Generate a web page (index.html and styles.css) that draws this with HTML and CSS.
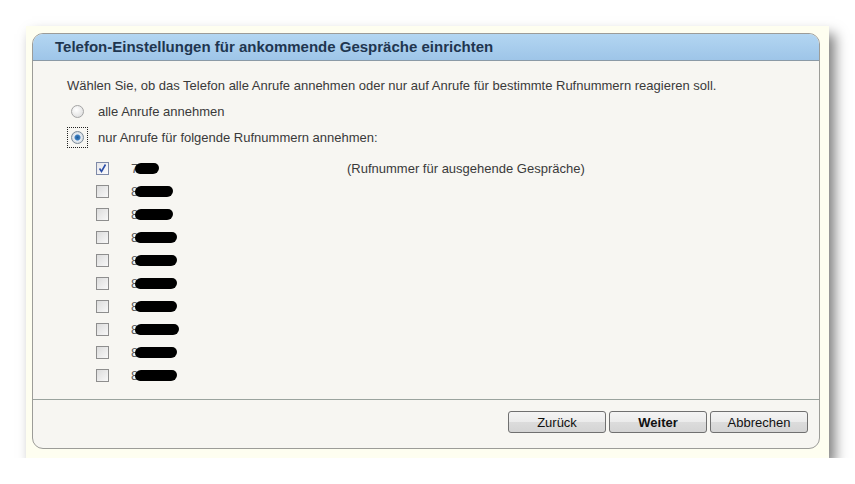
FILE: index.html
```html
<!DOCTYPE html>
<html lang="de">
<head>
    <meta charset="UTF-8">
    <title>Telefon-Einstellungen</title>
    <link rel="stylesheet" href="styles.css">
</head>
<body>
    <div class="frame">
        <div class="panel">
            <div class="panel-head">Telefon-Einstellungen für ankommende Gespräche einrichten</div>
            <div class="panel-body">
                <p class="intro">Wählen Sie, ob das Telefon alle Anrufe annehmen oder nur auf Anrufe für bestimmte Rufnummern reagieren soll.</p>
                <div class="radio-row">
                    <span class="radio"></span>
                    <span>alle Anrufe annehmen</span>
                </div>
                <div class="radio-row">
                    <span class="focus"><span class="radio checked"></span></span>
                    <span>nur Anrufe für folgende Rufnummern annehmen:</span>
                </div>
                <ul class="numbers">
                    <li>
                        <span class="check checked">
                            <svg width="11" height="11" viewBox="0 0 11 11"><path d="M2.5 5.5 L4.5 8.5 L8.5 1.5" fill="none" stroke="#2b4ea8" stroke-width="1.6"/></svg>
                        </span>
                        <span class="num">7<span class="blob" style="width:24px"></span></span>
                        <span class="note">(Rufnummer für ausgehende Gespräche)</span>
                    </li>
                    <li><span class="check"></span><span class="num">8<span class="blob" style="width:38px"></span></span></li>
                    <li><span class="check"></span><span class="num">8<span class="blob" style="width:38px"></span></span></li>
                    <li><span class="check"></span><span class="num">8<span class="blob" style="width:42px"></span></span></li>
                    <li><span class="check"></span><span class="num">8<span class="blob" style="width:42px"></span></span></li>
                    <li><span class="check"></span><span class="num">8<span class="blob" style="width:42px"></span></span></li>
                    <li><span class="check"></span><span class="num">8<span class="blob" style="width:42px"></span></span></li>
                    <li><span class="check"></span><span class="num">8<span class="blob" style="width:44px"></span></span></li>
                    <li><span class="check"></span><span class="num">8<span class="blob" style="width:42px"></span></span></li>
                    <li><span class="check"></span><span class="num">8<span class="blob" style="width:42px"></span></span></li>
                </ul>
            </div>
            <div class="panel-foot">
                <button>Zurück</button>
                <button class="primary">Weiter</button>
                <button>Abbrechen</button>
            </div>
        </div>
    </div>
</body>
</html>
```

FILE: styles.css
```css
body {
    margin: 0;
    background: #ffffff;
    font-family: "Liberation Sans", Arial, sans-serif;
    font-size: 13px;
    color: #3a3a3a;
}
.frame {
    margin: 26px 0 0 26px;
    width: 788px;
    height: 416px;
    padding: 7px 9px 9px 6px;
    background: #fefef0;
    box-shadow: 6px 8px 12px rgba(0, 0, 0, 0.5);
}
.panel {
    height: 414px;
    border: 1px solid #9c9c98;
    border-radius: 11px;
    background: #f7f6f2;
    display: flex;
    flex-direction: column;
    overflow: hidden;
}
.panel-head {
    height: 26px;
    line-height: 26px;
    padding-left: 22px;
    font-size: 15px;
    font-weight: bold;
    color: #1f3650;
    background: linear-gradient(#b3d6f2, #9ec5e8);
    border-bottom: 1px solid #8b9aa6;
}
.panel-body {
    flex: 1;
    padding: 17px 0 0 34px;
}
.intro {
    margin: 0 0 4px;
    line-height: 16px;
}
.radio-row {
    height: 26px;
    display: flex;
    align-items: center;
    gap: 14px;
    padding-left: 4px;
}
.radio {
    display: block;
    width: 11px;
    height: 11px;
    border: 1px solid #a4a4a4;
    border-radius: 50%;
    background: radial-gradient(circle at 40% 35%, #ffffff, #d8d8d8);
}
.radio.checked {
    background: radial-gradient(circle, #1d5a9a 0, #3d7fc0 2.5px, #e9eef4 3.5px, #cfd6de 6px);
    border-color: #7c8a98;
}
.focus {
    display: block;
    padding: 3px;
    margin: -4px;
    border: 1px dotted #222;
}
.numbers {
    list-style: none;
    margin: 7px 0 0;
    padding: 0 0 0 29px;
}
.numbers li {
    height: 23px;
    display: flex;
    align-items: center;
}
.check {
    width: 11px;
    height: 11px;
    border: 1px solid #8e8e8e;
    background: linear-gradient(135deg, #dcdcdc, #f8f8f8);
    display: flex;
    align-items: center;
    justify-content: center;
}
.check.checked {
    background: linear-gradient(135deg, #e6e6ea, #fbfbfd);
    border-color: #7f8aa8;
}
.num {
    margin-left: 22px;
    width: 216px;
    display: flex;
    align-items: center;
    color: #555;
}
.blob {
    display: inline-block;
    height: 11px;
    margin-left: -3px;
    background: #000;
    border-radius: 6px 5px 6px 5px;
}
.note {
    color: #3a3a3a;
}
.panel-foot {
    height: 37px;
    border-top: 1px solid #9aa39e;
    padding: 11px 11px 0 0;
    display: flex;
    justify-content: flex-end;
    gap: 3px;
}
button {
    width: 98px;
    height: 22px;
    padding: 0;
    font-family: "Liberation Sans", Arial, sans-serif;
    font-size: 13px;
    color: #111;
    border: 1px solid #707070;
    border-radius: 3px;
    background: linear-gradient(#f4f4f4 0, #ebebeb 50%, #dcdcdc 51%, #d4d4d4 100%);
}
button.primary {
    font-weight: bold;
}
```
